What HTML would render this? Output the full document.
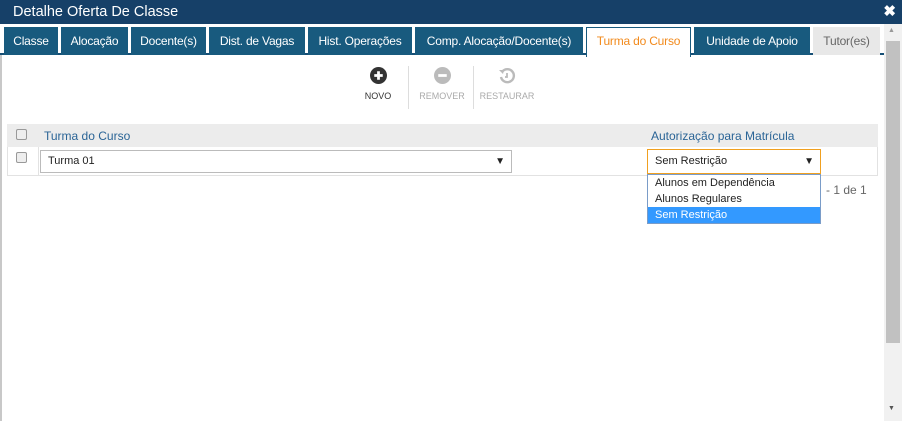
<!DOCTYPE html>
<html><head><meta charset="utf-8"><style>
*{box-sizing:border-box;margin:0;padding:0}
body{width:902px;height:421px;overflow:hidden;background:#fff;font-family:"Segoe UI","Liberation Sans",sans-serif;position:relative}
.title{position:absolute;left:0;top:0;width:902px;height:24px;background:#164068;color:#fff;font-size:14.5px;line-height:24px;padding-left:13px}
.close{position:absolute;right:6px;top:0;color:#fff;font-weight:bold;font-size:15px}
.tabbar{position:absolute;left:0;top:24px;width:884px;height:31px;background:#fff;border-bottom:2px solid #164f75}
.tab{position:absolute;top:3px;height:28px;background:#185a7e;color:#fff;font-size:12px;line-height:28px;text-align:center;letter-spacing:-0.2px}
.tab.act{background:#fff;color:#f28a1c;border:1px solid #185a7e;border-bottom:none;height:30px;top:3px;line-height:27px}
.tab.dis{background:#e8e8e8;color:#666}
.content{position:absolute;left:0;top:55px;width:884px;height:366px;border-left:2px solid #c8c8c8}
.sb{position:absolute;left:884px;top:24px;width:18px;height:397px;background:#f1f1f1}
.thumb{position:absolute;left:886px;top:41px;width:14px;height:302px;background:#c1c1c1}
.btn{position:absolute;top:67px;text-align:center;font-size:9px;color:#333}
.hdr{position:absolute;left:7px;top:124px;width:871px;height:23px;background:#ececec}
.row{position:absolute;left:7px;top:147px;width:871px;height:29px;border:1px solid #e2e2e2;border-top:none}
.cb{position:absolute;width:11px;height:11px;border:1px solid #999;border-radius:2px;background:#eee}
.lbl{position:absolute;font-size:12px;color:#2a6496}
.sel{position:absolute;border:1px solid #bbb;background:#fff;font-size:11px;color:#222;padding-left:7px;line-height:21px}
.arr{position:absolute;right:6px;top:0;font-size:10px}
</style></head><body>
<div class="title">Detalhe Oferta De Classe<span class="close">✖</span></div>
<div class="tabbar">
<div class="tab" style="left:4px;width:54px">Classe</div>
<div class="tab" style="left:61px;width:67px">Alocação</div>
<div class="tab" style="left:131px;width:75px">Docente(s)</div>
<div class="tab" style="left:209px;width:96px">Dist. de Vagas</div>
<div class="tab" style="left:308px;width:104px">Hist. Operações</div>
<div class="tab" style="left:415px;width:168px">Comp. Alocação/Docente(s)</div>
<div class="tab act" style="left:586px;width:105px">Turma do Curso</div>
<div class="tab" style="left:694px;width:116px">Unidade de Apoio</div>
<div class="tab dis" style="left:813px;width:67px">Tutor(es)</div>
</div>
<div class="content"></div>
<div class="sb"></div><div class="thumb"></div>
<div style="position:absolute;left:888px;top:27px;font-size:7px;color:#999">▲</div>
<div style="position:absolute;left:888px;top:405px;font-size:7px;color:#555">▼</div>
<div class="btn" style="left:360px;width:36px"><svg width="17" height="17" viewBox="0 0 16 16"><circle cx="8" cy="8" r="8" fill="#333"/><path d="M8 4v8M4 8h8" stroke="#fff" stroke-width="2.6"/></svg><div style="margin-top:5px">NOVO</div></div>
<div style="position:absolute;left:408px;top:66px;width:1px;height:43px;background:#ddd"></div>
<div class="btn" style="left:418px;width:48px;color:#aaa"><svg width="17" height="17" viewBox="0 0 16 16"><circle cx="8" cy="8" r="8" fill="#bbb"/><path d="M4 8h8" stroke="#fff" stroke-width="2.6"/></svg><div style="margin-top:5px">REMOVER</div></div>
<div style="position:absolute;left:473px;top:66px;width:1px;height:43px;background:#ddd"></div>
<div class="btn" style="left:479px;width:56px;color:#aaa"><svg width="18" height="18" viewBox="0 0 18 18"><path d="M4 5A6.5 6.5 0 1 1 3 10" fill="none" stroke="#bbb" stroke-width="2.4"/><path d="M1 3l5 0-1 4z" fill="#bbb"/><path d="M9 6v4h-2" fill="none" stroke="#bbb" stroke-width="1.8"/></svg><div style="margin-top:4px">RESTAURAR</div></div>
<div class="hdr"></div>
<div class="cb" style="left:16px;top:129px"></div>
<div class="lbl" style="left:44px;top:129px">Turma do Curso</div>
<div class="lbl" style="left:651px;top:129px">Autorização para Matrícula</div>
<div class="row"></div>
<div style="position:absolute;left:38px;top:147px;width:1px;height:28px;background:#e2e2e2"></div>
<div class="cb" style="left:16px;top:152px"></div>
<div class="sel" style="left:40px;top:150px;width:472px;height:23px">Turma 01<span class="arr">▼</span></div>
<div class="sel" style="left:647px;top:149px;width:174px;height:25px;border-color:#f0a020;line-height:23px">Sem Restrição<span class="arr">▼</span></div>
<div style="position:absolute;left:647px;top:174px;width:174px;height:50px;border:1px solid #7a9cc8;background:#fff;font-size:11px;color:#222;line-height:16px">
<div style="padding-left:7px">Alunos em Dependência</div>
<div style="padding-left:7px">Alunos Regulares</div>
<div style="padding-left:7px;background:#3399ff;color:#fff">Sem Restrição</div>
</div>
<div style="position:absolute;left:826px;top:183px;font-size:12px;color:#666">- 1 de 1</div>
</body></html>
